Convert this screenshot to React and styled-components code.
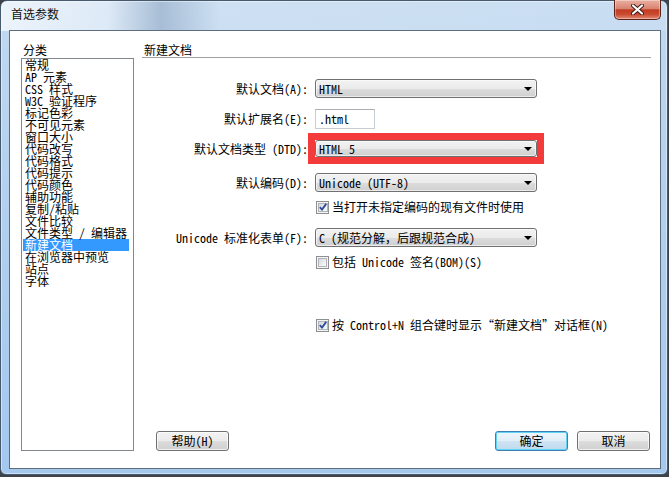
import React from "react";
import styled, { createGlobalStyle } from "styled-components";

const FONT = `"Noto Sans Mono CJK SC", "Liberation Mono", "Noto Sans CJK SC", monospace`;
const TITLE_FONT = `"Noto Sans CJK SC", "Liberation Sans", sans-serif`;

const GlobalStyle = createGlobalStyle`
  html, body {
    margin: 0;
    padding: 0;
    background: #3d4349;
  }
  body {
    font-family: ${FONT};
    font-size: 12px;
    color: #000;
  }
  * {
    box-sizing: border-box;
  }
`;

const Window = styled.div`
  width: 668px;
  height: 475px;
  border: 1px solid #46596d;
  border-radius: 7px 7px 6px 6px;
  padding: 0 6px 5px 8px;
  display: flex;
  flex-direction: column;
  background:
    linear-gradient(
        90deg,
        rgba(255, 255, 255, 0.7) 0%,
        rgba(255, 255, 255, 0.45) 16%,
        rgba(120, 140, 165, 0.35) 24%,
        rgba(255, 255, 255, 0.2) 33%,
        rgba(255, 255, 255, 0.12) 100%
      )
      top left / 100% 30px no-repeat,
    linear-gradient(180deg, #c2d9f0 0%, #b3d0ef 40%, #a4c8ee 100%);
  box-shadow: inset 0 0 0 1px rgba(255, 255, 255, 0.45);
`;

const TitleBar = styled.div`
  height: 29px;
  flex-shrink: 0;
  display: flex;
  justify-content: space-between;
  align-items: flex-start;
`;

const TitleText = styled.div`
  padding: 6px 0 0 2px;
  font-family: ${TITLE_FONT};
  font-size: 12px;
  line-height: 14px;
  color: #111;
`;

const CloseButton = styled.div`
  width: 47px;
  height: 20px;
  margin-top: -1px;
  border: 1px solid #5b231a;
  border-top: none;
  border-radius: 0 0 5px 5px;
  background: linear-gradient(
    180deg,
    #eab0a2 0%,
    #d98471 45%,
    #c13c22 52%,
    #c94a30 75%,
    #e08a72 100%
  );
  box-shadow: inset 0 0 0 1px rgba(255, 255, 255, 0.35);
  display: flex;
  align-items: center;
  justify-content: center;
`;

const Client = styled.div`
  flex: 1;
  min-height: 0;
  display: flex;
  background: #fff;
  border: 1px solid #5d6d7e;
`;

const Sidebar = styled.div`
  width: 124px;
  display: flex;
  flex-direction: column;
  padding: 12px 0 17px 11px;
`;

const Panel = styled.div`
  flex: 1;
  display: flex;
  flex-direction: column;
  margin-left: 8px;
  padding: 12px 9px 17px 0;
`;

const SectionTitle = styled.div`
  height: ${(p) => (p.$rule ? "15px" : "14px")};
  line-height: 14px;
  padding-left: 2px;
  margin-bottom: ${(p) => (p.$rule ? "0" : "1px")};
  border-bottom: ${(p) => (p.$rule ? "1px solid #a0a0a0" : "none")};
  white-space: nowrap;
`;

const ListBox = styled.div`
  flex: 1;
  border: 1px solid #828790;
  background: #fff;
`;

const ListItem = styled.div`
  height: 12px;
  line-height: 12px;
  margin: 0 4px 0 1px;
  padding-left: 2px;
  white-space: nowrap;
  background: ${(p) => (p.$selected ? "#3399ff" : "transparent")};
  color: ${(p) => (p.$selected ? "#fff" : "#000")};
`;

const Form = styled.div`
  flex: 1;
  display: flex;
  flex-direction: column;
`;

const Row = styled.div`
  display: grid;
  grid-template-columns: 166px 1fr;
  column-gap: 7px;
  align-items: center;
  height: ${(p) => p.$h}px;
  margin-top: ${(p) => p.$gap}px;
`;

const Label = styled.div`
  text-align: right;
  white-space: nowrap;
  line-height: 14px;
`;

const Control = styled.div`
  position: relative;
  display: flex;
  align-items: center;
  height: 100%;
`;

const Combo = styled.div`
  width: 222px;
  height: 100%;
  display: flex;
  align-items: center;
  justify-content: space-between;
  padding: 0 4px 0 3px;
  border: 1px solid #707070;
  border-radius: 3px;
  background: linear-gradient(
    180deg,
    #f2f2f2 0%,
    #ebebeb 50%,
    #dddddd 51%,
    #cfcfcf 100%
  );
  box-shadow: inset 0 0 0 1px rgba(255, 255, 255, 0.6);
  white-space: nowrap;
  line-height: 14px;
`;

const Arrow = styled.span`
  width: 0;
  height: 0;
  border-left: 4px solid transparent;
  border-right: 4px solid transparent;
  border-top: 4px solid #000;
`;

const TextBox = styled.div`
  width: 60px;
  height: 100%;
  display: flex;
  align-items: center;
  padding-left: 3px;
  border: 1px solid #c8cdd3;
  border-top-color: #abadb3;
  background: #fff;
  line-height: 14px;
`;

const Mark = styled.div`
  position: absolute;
  top: -7px;
  left: -7px;
  width: 236px;
  bottom: -7px;
  border: 7px solid #f33b3b;
  pointer-events: none;
`;

const CheckLine = styled.div`
  display: flex;
  align-items: center;
  gap: 3px;
  padding-left: 1px;
  white-space: nowrap;
  line-height: 14px;
`;

const Box = styled.span`
  width: 13px;
  height: 13px;
  flex-shrink: 0;
  border: 1px solid #8e8f8f;
  padding: 1px;
  background: #f4f4f4;
  display: flex;
`;

const BoxInner = styled.span`
  flex: 1;
  border: 1px solid #b1b5bb;
  background: linear-gradient(135deg, #d4d7dc 0%, #eceef0 60%, #fafafa 100%);
  display: flex;
  align-items: center;
  justify-content: center;
`;

const ButtonRow = styled.div`
  display: flex;
  justify-content: space-between;
  padding: 0 1px 0 14px;
`;

const ButtonGroup = styled.div`
  display: flex;
  gap: 9px;
`;

const Button = styled.div`
  width: 73px;
  height: 20px;
  display: flex;
  align-items: center;
  justify-content: center;
  border: 1px solid ${(p) => (p.$primary ? "#3c7fb1" : "#707070")};
  border-radius: 3px;
  background: ${(p) =>
    p.$primary
      ? "linear-gradient(180deg, #eef6fb 0%, #e1eef7 50%, #cfe4f3 51%, #bfd9ee 100%)"
      : "linear-gradient(180deg, #f2f2f2 0%, #ebebeb 50%, #dddddd 51%, #cfcfcf 100%)"};
  box-shadow: inset 0 0 0 1px
    ${(p) => (p.$primary ? "#61d3f6" : "rgba(255, 255, 255, 0.7)")};
  white-space: nowrap;
  line-height: 14px;
`;

const categories = [
  "常规",
  "AP 元素",
  "CSS 样式",
  "W3C 验证程序",
  "标记色彩",
  "不可见元素",
  "窗口大小",
  "代码改写",
  "代码格式",
  "代码提示",
  "代码颜色",
  "辅助功能",
  "复制/粘贴",
  "文件比较",
  "文件类型 / 编辑器",
  "新建文档",
  "在浏览器中预览",
  "站点",
  "字体",
];

function CloseIcon() {
  return (
    <svg width="13" height="11" viewBox="0 0 13 11">
      <path
        d="M2 1.5 L11 9.5 M11 1.5 L2 9.5"
        stroke="#3b1712"
        strokeWidth="4"
        strokeLinecap="round"
      />
      <path
        d="M2 1.5 L11 9.5 M11 1.5 L2 9.5"
        stroke="#fff"
        strokeWidth="2.2"
        strokeLinecap="round"
      />
    </svg>
  );
}

function Checkbox({ checked, children }) {
  return (
    <CheckLine>
      <Box>
        <BoxInner>
          {checked && (
            <svg width="8" height="8" viewBox="0 0 8 8">
              <path
                d="M0.8 4.2 L3 6.6 L7.2 0.9"
                fill="none"
                stroke="#2f4a9a"
                strokeWidth="1.8"
              />
            </svg>
          )}
        </BoxInner>
      </Box>
      <span>{children}</span>
    </CheckLine>
  );
}

function Select({ value }) {
  return (
    <Combo>
      <span>{value}</span>
      <Arrow />
    </Combo>
  );
}

export default function App() {
  return (
    <>
      <GlobalStyle />
      <Window>
        <TitleBar>
          <TitleText>首选参数</TitleText>
          <CloseButton>
            <CloseIcon />
          </CloseButton>
        </TitleBar>
        <Client>
          <Sidebar>
            <SectionTitle>分类</SectionTitle>
            <ListBox>
              {categories.map((name) => (
                <ListItem key={name} $selected={name === "新建文档"}>
                  {name}
                </ListItem>
              ))}
            </ListBox>
          </Sidebar>
          <Panel>
            <SectionTitle $rule>新建文档</SectionTitle>
            <Form>
              <Row $h={19} $gap={21}>
                <Label>默认文档(A):</Label>
                <Control>
                  <Select value="HTML" />
                </Control>
              </Row>
              <Row $h={20} $gap={11}>
                <Label>默认扩展名(E):</Label>
                <Control>
                  <TextBox>.html</TextBox>
                </Control>
              </Row>
              <Row $h={17} $gap={11}>
                <Label>默认文档类型 (DTD):</Label>
                <Control>
                  <Select value="HTML 5" />
                  <Mark />
                </Control>
              </Row>
              <Row $h={19} $gap={16}>
                <Label>默认编码(D):</Label>
                <Control>
                  <Select value="Unicode (UTF-8)" />
                </Control>
              </Row>
              <Row $h={14} $gap={8}>
                <span />
                <Checkbox checked>当打开未指定编码的现有文件时使用</Checkbox>
              </Row>
              <Row $h={19} $gap={14}>
                <Label>Unicode 标准化表单(F):</Label>
                <Control>
                  <Select value="C (规范分解，后跟规范合成)" />
                </Control>
              </Row>
              <Row $h={14} $gap={8}>
                <span />
                <Checkbox>包括 Unicode 签名(BOM)(S)</Checkbox>
              </Row>
              <Row $h={14} $gap={49}>
                <span />
                <Checkbox checked>
                  按 Control+N 组合键时显示“新建文档”对话框(N)
                </Checkbox>
              </Row>
            </Form>
            <ButtonRow>
              <Button>帮助(H)</Button>
              <ButtonGroup>
                <Button $primary>确定</Button>
                <Button>取消</Button>
              </ButtonGroup>
            </ButtonRow>
          </Panel>
        </Client>
      </Window>
    </>
  );
}
